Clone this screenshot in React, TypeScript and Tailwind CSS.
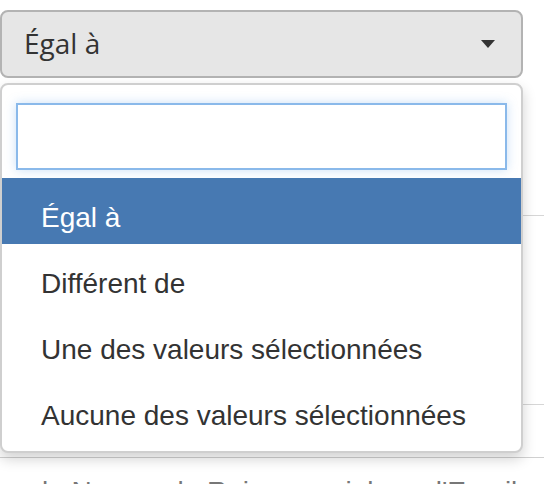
import React from "react"

const options = [
  "Égal à",
  "Différent de",
  "Une des valeurs sélectionnées",
  "Aucune des valeurs sélectionnées",
]

export default function App() {
  return (
    <div className="relative w-[544px] h-[484px] overflow-hidden bg-white font-['Liberation_Sans',Arial,sans-serif] text-[#333]">
      {/* select button */}
      <div className="pt-[10px]">
        <div className="flex items-center justify-between w-[523px] h-[68px] rounded-[8px] border-2 border-[#b3b3b3] bg-[#e6e6e6] pl-[22px] pr-[26px]">
          <span className="font-['Open_Sans',sans-serif] text-[28px] text-[#333] leading-none pb-[2px]">
            Égal à
          </span>
          <span className="w-0 h-0 border-l-[7px] border-r-[7px] border-t-[8px] border-l-transparent border-r-transparent border-t-[#333]" />
        </div>
      </div>

      {/* page content behind the dropdown */}
      <div className="mt-[5px]">
        <div className="h-[133px] border-b border-[#d6d6d6]" />
        <div className="h-[189px] border-b border-[#d6d6d6]" />
        <div className="h-[53px] border-b border-[#d0d0d0]" />
        <div className="pl-[42px] pt-[18px] text-[28px] leading-[32px] text-[#777] whitespace-nowrap">
          le Nom ou la Raison sociale ou l'Email
        </div>
      </div>

      {/* dropdown */}
      <div className="absolute left-0 top-[83px] w-[523px] rounded-[8px] border-2 border-[#cfcfcf] bg-white shadow-[0_6px_14px_rgba(0,0,0,0.18)]">
        <div className="pt-[18px] pl-[14px] pr-[14px] pb-[8px]">
          <input
            className="block w-full h-[67px] border-2 border-[#8ab9ea] bg-white outline-none shadow-[0_0_10px_rgba(102,165,233,0.35)]"
            type="text"
          />
        </div>
        <ul className="pb-[9px]">
          {options.map((o, i) => (
            <li
              key={o}
              className={
                i === 0
                  ? "h-[66px] flex items-center pt-[14px] pl-[39px] text-[28px] bg-[#4779b2] text-white"
                  : "h-[66px] flex items-center pt-[14px] pl-[39px] text-[28px] text-[#333]"
              }
            >
              {o}
            </li>
          ))}
        </ul>
      </div>
    </div>
  )
}
